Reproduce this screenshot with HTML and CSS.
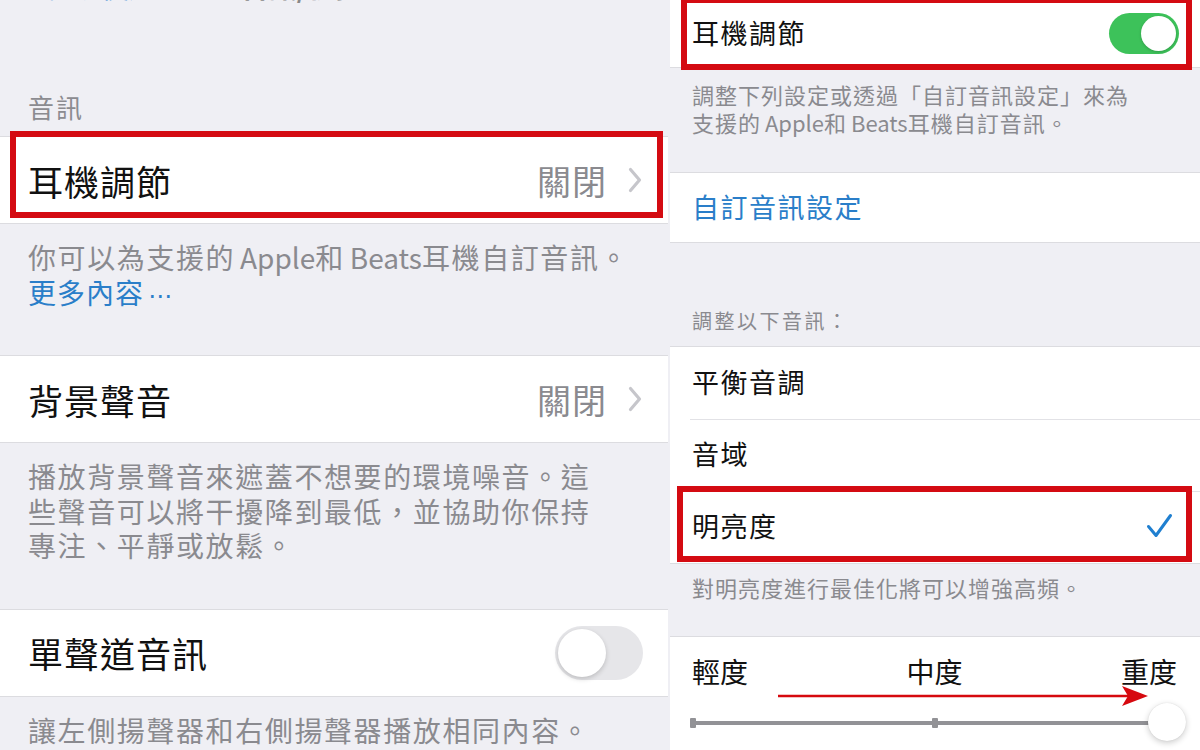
FILE: index.html
```html
<!DOCTYPE html>
<html lang="zh-Hant">
<head>
    <meta charset="UTF-8">
    <meta name="viewport" content="width=device-width, initial-scale=1.0">
    <title>耳機調節</title>
    <link rel="stylesheet" href="styles.css">
</head>
<body>
    <div class="screens">
        <!-- left screen: 音訊/視覺 -->
        <section class="panel panel-left">
            <div class="nav">
                <div class="nav-inner">
                    <span class="nav-back">‹ 輔助使用</span>
                    <span class="nav-title">音訊/視覺</span>
                </div>
            </div>

            <div class="group-title">音訊</div>
            <div class="cell mark mark-left">
                <span class="cell-label">耳機調節</span>
                <span class="cell-value">關閉</span>
                <svg class="chevron" width="14" height="26" viewBox="0 0 14 26">
                    <path d="M2.5 2.5 L11.5 13 L2.5 23.5" fill="none" stroke="#c6c6cb" stroke-width="3.2" stroke-linecap="round" stroke-linejoin="round"/>
                </svg>
            </div>
            <div class="group-footer">
                你可以為支援的 <span class="latin">Apple</span>和 <span class="latin">Beats</span>耳機自訂音訊。<br>
                <span class="link">更多內容 <span class="dots">⋯</span></span>
            </div>

            <div class="cell">
                <span class="cell-label">背景聲音</span>
                <span class="cell-value">關閉</span>
                <svg class="chevron" width="14" height="26" viewBox="0 0 14 26">
                    <path d="M2.5 2.5 L11.5 13 L2.5 23.5" fill="none" stroke="#c6c6cb" stroke-width="3.2" stroke-linecap="round" stroke-linejoin="round"/>
                </svg>
            </div>
            <div class="group-footer">
                播放背景聲音來遮蓋不想要的環境噪音。這<br>
                些聲音可以將干擾降到最低，並協助你保持<br>
                專注、平靜或放鬆。
            </div>

            <div class="cell">
                <span class="cell-label">單聲道音訊</span>
                <span class="switch switch-off"><span class="switch-knob"></span></span>
            </div>
            <div class="group-footer">讓左側揚聲器和右側揚聲器播放相同內容。</div>
        </section>

        <!-- right screen: 耳機調節 -->
        <section class="panel panel-right">
            <div class="row mark mark-top">
                <span class="row-label">耳機調節</span>
                <span class="switch switch-on"><span class="switch-knob"></span></span>
            </div>
            <div class="row-footer row-footer-top">
                調整下列設定或透過「自訂音訊設定」來為<br>
                支援的 <span class="latin">Apple</span>和 <span class="latin">Beats</span>耳機自訂音訊。
            </div>

            <div class="row row-single">
                <span class="row-label link">自訂音訊設定</span>
            </div>

            <div class="row-header">調整以下音訊：</div>
            <div class="row-group">
                <div class="row"><span class="row-label">平衡音調</span></div>
                <div class="row"><span class="row-label">音域</span></div>
                <div class="row mark mark-bright">
                    <span class="row-label">明亮度</span>
                    <svg class="check" width="27" height="26" viewBox="0 0 27 26">
                        <path d="M2.5 13.5 L10 22.5 L24.5 2.5" fill="none" stroke="#1f7fd0" stroke-width="3" stroke-linecap="round" stroke-linejoin="round"/>
                    </svg>
                </div>
            </div>
            <div class="row-footer row-footer-bright">對明亮度進行最佳化將可以增強高頻。</div>

            <div class="slider-cell">
                <div class="slider-labels">
                    <span>輕度</span>
                    <span>中度</span>
                    <span>重度</span>
                </div>
                <div class="slider">
                    <span class="tick tick-start"></span>
                    <span class="tick tick-mid"></span>
                    <span class="slider-knob"></span>
                </div>
                <svg class="arrow" width="372" height="22" viewBox="0 0 372 22">
                    <line x1="0" y1="11" x2="352" y2="11" stroke="#d6090f" stroke-width="2.5"/>
                    <polygon points="344,1 370,11 344,21 350,11" fill="#d6090f"/>
                </svg>
            </div>
        </section>
    </div>
</body>
</html>
```

FILE: styles.css
```css
* {
    margin: 0;
    padding: 0;
    box-sizing: border-box;
}

body {
    font-family: 'Noto Sans CJK TC', 'Noto Sans', sans-serif;
    background: #efeff4;
    color: #111;
    width: 1200px;
    height: 750px;
    overflow: hidden;
}

.screens {
    display: flex;
    height: 750px;
}

.panel {
    background: #efeff4;
    height: 750px;
    overflow: hidden;
}

.panel-left {
    width: 668px;
}

.panel-right {
    flex: 1;
    margin-left: 2px;
}

.link {
    color: #2a7ec9;
}

.latin {
    letter-spacing: 0;
}

.dots {
    font-family: 'DejaVu Sans', sans-serif;
    font-size: 24px;
    line-height: 0;
    letter-spacing: 0;
}

/* clipped nav bar at the very top */
.nav {
    height: 4px;
    overflow: hidden;
}

.nav-inner {
    display: flex;
    gap: 84px;
    margin-top: -31px;
    padding-left: 30px;
    font-size: 28px;
    line-height: 34px;
}

.nav-back {
    color: #1f7fd0;
}

.nav-title {
    color: #888;
    font-weight: 700;
}

/* left screen */
.group-title {
    padding: 87px 28px 13px;
    font-size: 26px;
    line-height: 32px;
    letter-spacing: 2px;
    color: #8b8b90;
}

.cell {
    display: flex;
    align-items: center;
    height: 88px;
    padding: 0 26px 0 28px;
    background: #fff;
    border-top: 1px solid #dcdce0;
    border-bottom: 1px solid #dcdce0;
}

.cell-label {
    flex: 1;
    font-size: 35px;
    letter-spacing: 1px;
}

.cell-value {
    font-size: 34px;
    letter-spacing: 1px;
    color: #8a8a8f;
    margin-right: 21px;
}

.group-footer {
    padding: 16px 0 46px 28px;
    font-size: 28px;
    line-height: 34.5px;
    letter-spacing: 1.6px;
    word-spacing: -3px;
    white-space: nowrap;
    color: #8a8a8f;
}

.group-footer .link {
    letter-spacing: 1px;
}

/* switches */
.switch {
    position: relative;
    display: block;
    border-radius: 30px;
}

.switch-off {
    width: 88px;
    height: 54px;
    margin-right: -1px;
    background: #e6e6e9;
}

.switch-off .switch-knob {
    position: absolute;
    left: 3px;
    top: 3px;
    width: 48px;
    height: 48px;
    border-radius: 50%;
    background: #fff;
    box-shadow: 0 2px 5px rgba(0,0,0,0.18);
}

.switch-on {
    width: 70px;
    height: 41px;
    background: #3dc25a;
    margin-right: 21px;
}

.switch-on .switch-knob {
    position: absolute;
    right: 3px;
    top: 3px;
    width: 35px;
    height: 35px;
    border-radius: 50%;
    background: #fff;
    box-shadow: 0 1px 3px rgba(0,0,0,0.2);
}

/* right screen */
.row {
    display: flex;
    align-items: center;
    height: 72px;
    padding-left: 22px;
    background: #fff;
}

.row-label {
    flex: 1;
    font-size: 27px;
    line-height: 34px;
    letter-spacing: 1.5px;
    margin-top: -3px;
}

.mark-top {
    height: 68px;
    border-bottom: 1px solid #dcdce0;
    justify-content: space-between;
}

.mark-top .row-label {
    margin-top: -1px;
}

.row-footer {
    padding: 12px 0 35px 22px;
    font-size: 22px;
    line-height: 28px;
    letter-spacing: 1px;
    word-spacing: -2px;
    white-space: nowrap;
    color: #8a8a8f;
}

.row-footer-top {
    padding-bottom: 36px;
}

.row-single {
    height: 71px;
    border-top: 1px solid #dcdce0;
    border-bottom: 1px solid #dcdce0;
}

.row-single .row-label {
    margin-top: -2px;
}

.row-header {
    padding: 64px 22px 11px;
    font-size: 20px;
    line-height: 28px;
    letter-spacing: 2.5px;
    color: #8a8a8f;
}

.row-group {
    background: #fff;
    border-top: 1px solid #dcdce0;
    border-bottom: 1px solid #dcdce0;
}

.row-group .row + .row {
    border-top: 1px solid #e2e2e6;
    margin-left: 20px;
    padding-left: 2px;
}

.check {
    margin-right: 27px;
    margin-top: -3px;
}

.row-footer-bright {
    padding-top: 9px;
    padding-bottom: 35px;
}

/* slider */
.slider-cell {
    position: relative;
    height: 120px;
    padding-top: 17px;
    background: #fff;
    border-top: 1px solid #dcdce0;
}

.slider-labels {
    display: flex;
    justify-content: space-between;
    padding: 0 23px 0 22px;
    font-size: 28px;
    line-height: 34px;
}

.slider {
    position: relative;
    height: 4px;
    margin: 33px 33px 0 20px;
    background: #929296;
}

.tick {
    position: absolute;
    top: -3px;
    width: 6px;
    height: 10px;
    border-radius: 1px;
    background: #929296;
}

.tick-start {
    left: 0;
}

.tick-mid {
    left: 242px;
}

.slider-knob {
    position: absolute;
    right: -19px;
    top: -18px;
    width: 38px;
    height: 38px;
    border-radius: 50%;
    background: #fff;
    box-shadow: 0 2px 6px rgba(0,0,0,0.2), 0 0 1px rgba(0,0,0,0.15);
}

.arrow {
    position: absolute;
    left: 108px;
    top: 48px;
}

/* red annotation boxes */
.mark {
    position: relative;
}

.mark::after {
    content: '';
    position: absolute;
    border: 6px solid #d40b12;
    pointer-events: none;
}

.mark-left::after {
    left: 10px;
    right: 5px;
    top: -6px;
    bottom: 5px;
}

.mark-top::after {
    left: 11px;
    right: 8px;
    top: -3px;
    bottom: -3px;
}

.mark-bright::after {
    left: -13px;
    right: 8px;
    top: -6px;
    bottom: 1px;
}
```
